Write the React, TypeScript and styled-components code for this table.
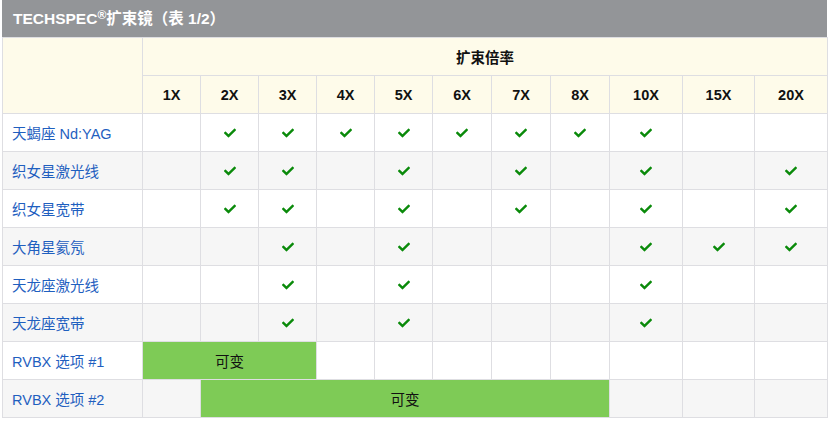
import React from 'react'
import styled, { createGlobalStyle } from 'styled-components'
import { FaCheck } from 'react-icons/fa'

const GlobalStyle = createGlobalStyle`
  body {
    margin: 0;
    background: #ffffff;
    font-family: "Liberation Sans", Arial, "Noto Sans CJK SC", sans-serif;
  }
`

const mags = ['1X', '2X', '3X', '4X', '5X', '6X', '7X', '8X', '10X', '15X', '20X']
const widths = [58, 58, 58, 58, 58, 59, 59, 59, 73, 72, 73]

type Row =
  | { name: string; checks: number[] }
  | { name: string; span: [number, number] }

const rows: Row[] = [
  { name: '天蝎座 Nd:YAG', checks: [1, 2, 3, 4, 5, 6, 7, 8] },
  { name: '织女星激光线', checks: [1, 2, 4, 6, 8, 10] },
  { name: '织女星宽带', checks: [1, 2, 4, 6, 8, 10] },
  { name: '大角星氦氖', checks: [2, 4, 8, 9, 10] },
  { name: '天龙座激光线', checks: [2, 4, 8] },
  { name: '天龙座宽带', checks: [2, 4, 8] },
  { name: 'RVBX 选项 #1', span: [0, 3] },
  { name: 'RVBX 选项 #2', span: [1, 8] },
]

const App: React.FC = () => {
  return (
    <Page>
      <GlobalStyle />
      <Title>
        TECHSPEC<Sup>®</Sup>扩束镜（表 1/2）
      </Title>
      <Table>
        <colgroup>
          <col style={{ width: 140 }} />
          {widths.map((w, i) => (
            <col key={i} style={{ width: w }} />
          ))}
        </colgroup>
        <thead>
          <tr>
            <HeadCell rowSpan={2} />
            <HeadCell colSpan={11}>扩束倍率</HeadCell>
          </tr>
          <tr>
            {mags.map((m) => (
              <HeadCell key={m}>{m}</HeadCell>
            ))}
          </tr>
        </thead>
        <tbody>
          {rows.map((row, r) => (
            <BodyRow key={row.name} $alt={r % 2 === 1}>
              <NameCell>{row.name}</NameCell>
              {'checks' in row
                ? mags.map((m, i) => (
                    <Cell key={m}>
                      {row.checks.includes(i) && <Check />}
                    </Cell>
                  ))
                : renderSpan(row.span)}
            </BodyRow>
          ))}
        </tbody>
      </Table>
    </Page>
  )
}

function renderSpan([from, to]: [number, number]) {
  const cells: React.ReactNode[] = []
  for (let i = 0; i < from; i++) cells.push(<Cell key={'a' + i} />)
  cells.push(
    <GreenCell key="g" colSpan={to - from}>
      可变
    </GreenCell>
  )
  for (let i = to; i < mags.length; i++) cells.push(<Cell key={'b' + i} />)
  return cells
}

export default App

const Page = styled.div`
  width: 825px;
  padding: 0 2px;
`

const Title = styled.div`
  height: 37px;
  background: #939598;
  color: #ffffff;
  font-weight: bold;
  font-size: 15.5px;
  line-height: 37px;
  padding-left: 11px;
`

const Sup = styled.sup`
  font-size: 12px;
  line-height: 0;
  vertical-align: 5px;
`

const Table = styled.table`
  width: 825px;
  table-layout: fixed;
  border-collapse: collapse;
  font-size: 14.5px;
`

const HeadCell = styled.th`
  height: 37px;
  padding: 0;
  background: #fefbea;
  border: 1px solid #dedee2;
  color: #111111;
  font-size: 14.5px;
  font-weight: bold;
  text-align: center;
  vertical-align: middle;
`

const BodyRow = styled.tr<{ $alt: boolean }>`
  height: 38px;
  background: ${(p) => (p.$alt ? '#f6f6f6' : '#ffffff')};
`

const Cell = styled.td`
  padding: 0;
  border: 1px solid #dedee2;
  text-align: center;
  vertical-align: middle;
`

const NameCell = styled(Cell)`
  text-align: left;
  padding-left: 9px;
  color: #1f5fbf;
  white-space: nowrap;
`

const GreenCell = styled(Cell)`
  background: #7ecb56;
  color: #111111;
`

const Check = styled(FaCheck)`
  color: #0a8a0a;
  width: 14px;
  height: 12px;
  display: block;
  margin: 0 auto;
`
